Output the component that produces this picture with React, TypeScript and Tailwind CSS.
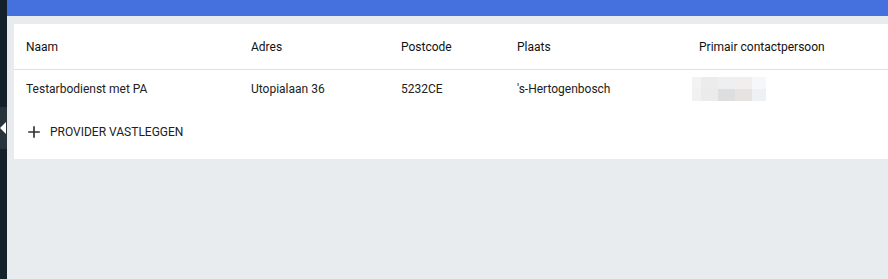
const cols = 'grid grid-cols-[225px_150px_116px_182px_1fr] pl-[12px]'

const blur = [
  ['#f3f3f3', '#ececec', '#eeeff1', '#f1efee', '#f5f7fa'],
  ['#f0f1f1', '#ebebeb', '#dedede', '#e6e3e1', '#eef1f4'],
]
const blurW = ['w-[9px]', 'w-[17px]', 'w-[17px]', 'w-[17px]', 'w-[14px]']

export default function App() {
  return (
    <div className="flex h-[279px] w-[888px] overflow-hidden font-['Roboto',sans-serif] text-[12px] text-[#212121]">
      <aside className="w-[7px] shrink-0 bg-[#13212b]">
        <div className="mt-[107px] flex h-[42px] items-center bg-[#27343c]">
          <div className="h-0 w-0 border-y-[6px] border-r-[6px] border-y-transparent border-r-white" />
        </div>
      </aside>
      <main className="flex flex-1 flex-col bg-[#e9ecef]">
        <div className="h-[16px] bg-[#4571de]" />
        <div className="pl-[7px] pt-[8px]">
          <section className="bg-white">
            <div className={`${cols} h-[46px] items-center border-b border-[#e0e0e0] text-[#111]`}>
              <span>Naam</span>
              <span>Adres</span>
              <span>Postcode</span>
              <span>Plaats</span>
              <span>Primair contactpersoon</span>
            </div>
            <div className={`${cols} h-[37px] items-center`}>
              <span>Testarbodienst met PA</span>
              <span>Utopialaan 36</span>
              <span>5232CE</span>
              <span>'s-Hertogenbosch</span>
              <div className="-ml-[7px] flex flex-col">
                {blur.map((row, i) => (
                  <div key={i} className="flex h-[12px]">
                    {row.map((c, j) => (
                      <div key={j} className={`${blurW[j]} h-full`} style={{ backgroundColor: c }} />
                    ))}
                  </div>
                ))}
              </div>
            </div>
            <div className="flex h-[52px] items-center pb-[3px] pl-[10px]">
              <button className="flex items-center gap-[6px] uppercase">
                <svg width="20" height="20" viewBox="0 0 24 24" className="fill-[#333]">
                  <path d="M19 13h-6v6h-2v-6H5v-2h6V5h2v6h6v2z" />
                </svg>
                <span>Provider vastleggen</span>
              </button>
            </div>
          </section>
        </div>
      </main>
    </div>
  )
}
